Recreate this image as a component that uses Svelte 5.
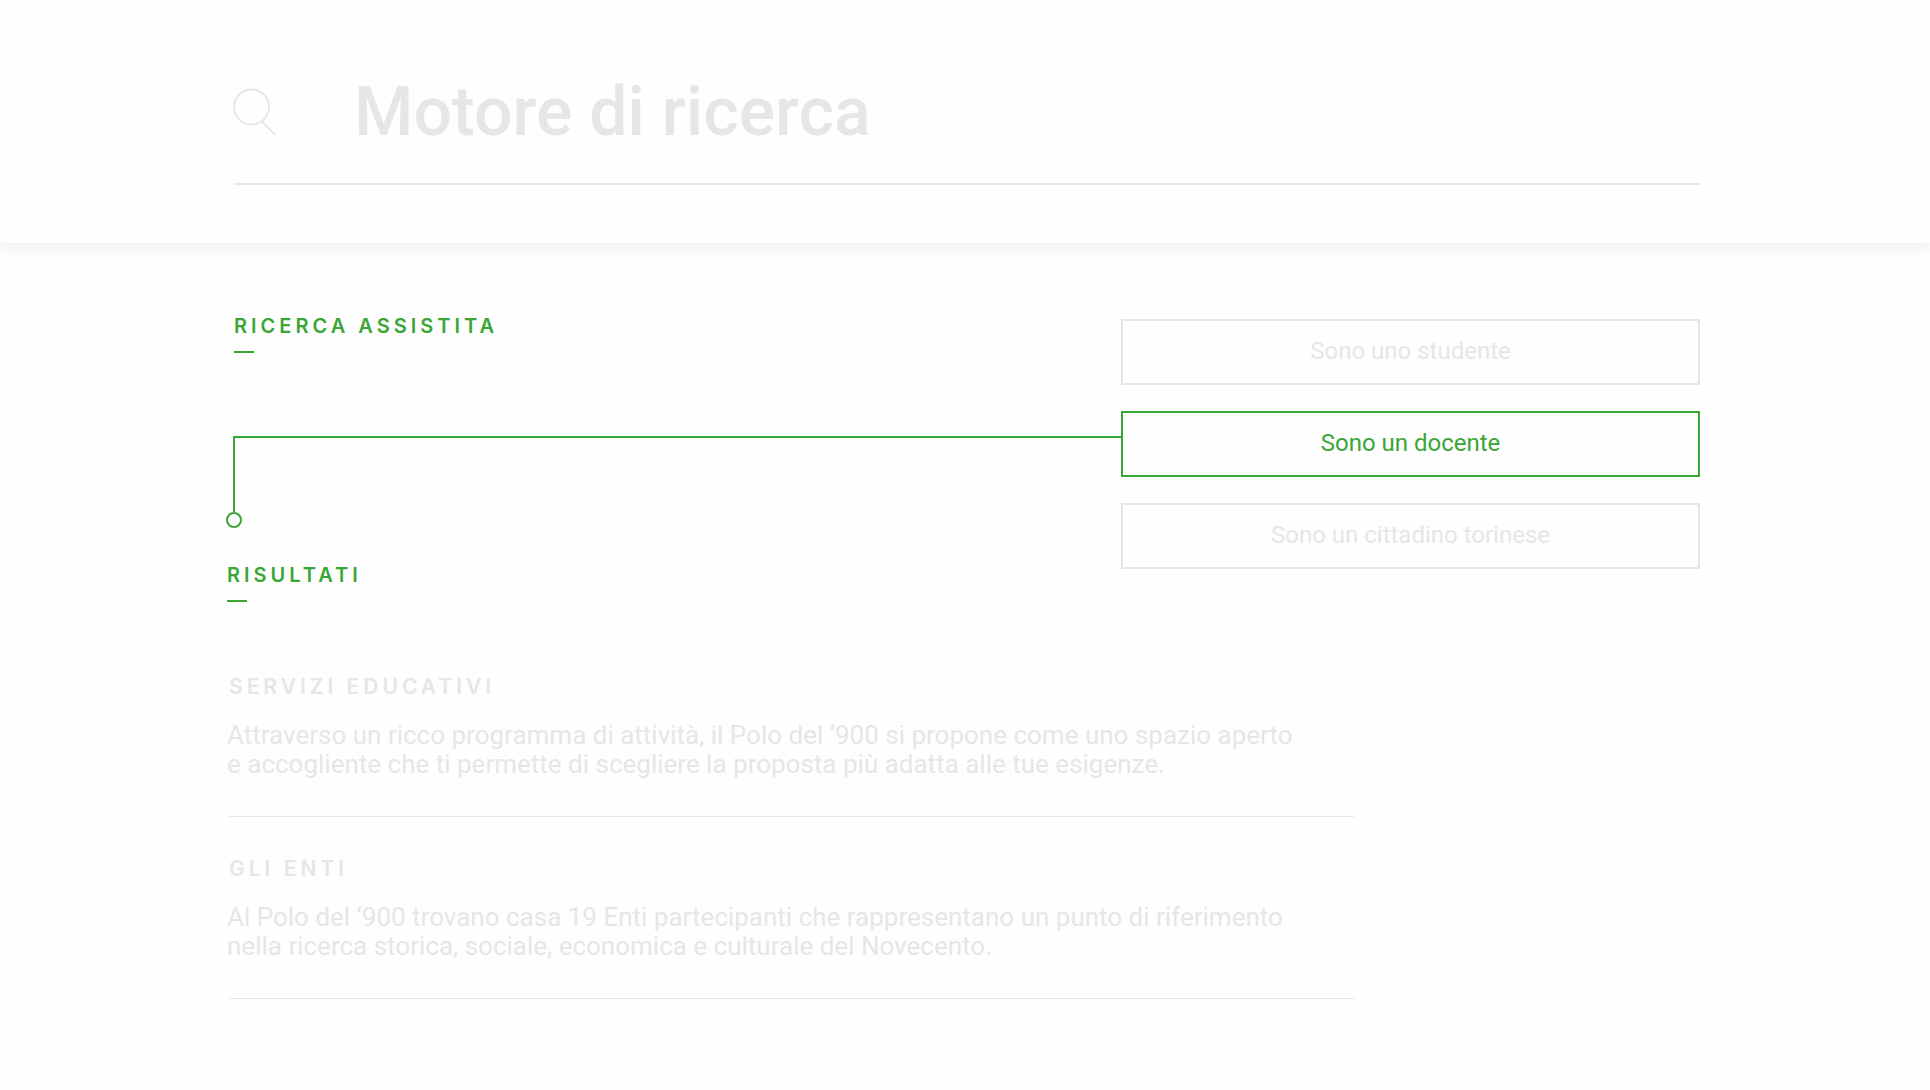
<script lang="ts">
  type Result = { title: string; lines: string[] };

  const profiles = ['Sono uno studente', 'Sono un docente', 'Sono un cittadino torinese'];

  const results: Result[] = [
    {
      title: 'Servizi educativi',
      lines: [
        'Attraverso un ricco programma di attività, il Polo del ‘900 si propone come uno spazio aperto',
        'e accogliente che ti permette di scegliere la proposta più adatta alle tue esigenze.'
      ]
    },
    {
      title: 'Gli enti',
      lines: [
        'Al Polo del ‘900 trovano casa 19 Enti partecipanti che rappresentano un punto di riferimento',
        'nella ricerca storica, sociale, economica e culturale del Novecento.'
      ]
    }
  ];

  let query = $state('');
  let selected = $state(1);
</script>

<header>
  <form class="search" role="search" onsubmit={(e) => e.preventDefault()}>
    <label for="query" aria-label="Motore di ricerca">
      <svg width="44" height="48" viewBox="0 0 44 48" fill="none" stroke="currentColor" stroke-width="2">
        <circle cx="17.5" cy="19" r="17.5" />
        <path d="M27.5 33 L41.5 47" />
      </svg>
    </label>
    <input id="query" type="text" placeholder="Motore di ricerca" bind:value={query} />
  </form>
</header>

<main>
  <section class="assisted">
    <div class="path">
      <h2 class="inset">Ricerca assistita</h2>
      <!-- line from the selected profile down to the results -->
      <div class="connector"></div>
      <h2>Risultati</h2>
    </div>
    <div class="profiles">
      {#each profiles as profile, i}
        <button
          type="button"
          class:active={selected === i}
          aria-pressed={selected === i}
          onclick={() => (selected = i)}
        >
          {profile}
        </button>
      {/each}
    </div>
  </section>

  <section class="results">
    {#each results as result}
      <article>
        <h3>{result.title}</h3>
        <p>{result.lines[0]}<br />{result.lines[1]}</p>
        <hr />
      </article>
    {/each}
  </section>
</main>

<style>
  :global(body) {
    margin: 0;
    background: #fefefe;
    font-family: Roboto, 'Liberation Sans', sans-serif;
    --green: #3aa635;
    --grey: #e6e6e6;
  }

  header {
    padding: 72px 230px 58px 234px;
    background: #fefefe;
    box-shadow: 0 0 20px rgba(0, 0, 0, 0.1);
  }

  .search {
    display: flex;
    align-items: center;
    gap: 76px;
    padding-bottom: 31px;
    border-bottom: 2px solid var(--grey);
    color: var(--grey);
  }

  .search label {
    display: flex;
  }

  .search svg {
    overflow: visible;
  }

  .search input {
    flex: 1;
    min-width: 0;
    height: 80px;
    padding: 0;
    border: 0;
    outline: 0;
    background: none;
    color: #999;
    font: 500 68px/80px Roboto, 'Liberation Sans', sans-serif;
  }

  .search input::placeholder {
    color: var(--grey);
    opacity: 1;
  }

  main {
    padding: 73px 230px 90px 227px;
  }

  .assisted {
    display: grid;
    grid-template-columns: 894fr 579fr;
  }

  .inset {
    margin-left: 7px;
  }

  h2,
  h3 {
    margin: 0;
    font-family: Inter, 'Liberation Sans', sans-serif;
    font-weight: 600;
    letter-spacing: 4px;
    text-transform: uppercase;
  }

  h2 {
    font-size: 20px;
    line-height: 20px;
    color: var(--green);
  }

  h2::after {
    content: '';
    display: block;
    width: 20px;
    height: 2px;
    margin-top: 15px;
    background: var(--green);
  }

  .connector {
    position: relative;
    box-sizing: border-box;
    height: 76px;
    margin: 83px 0 53px 6px;
    border: solid var(--green);
    border-width: 2px 0 0 2px;
  }

  .connector::after {
    content: '';
    position: absolute;
    top: 100%;
    left: -9px;
    width: 12px;
    height: 12px;
    border: 2px solid var(--green);
    border-radius: 50%;
  }

  .profiles {
    display: flex;
    flex-direction: column;
    gap: 26px;
    padding-top: 3px;
  }

  button {
    height: 66px;
    padding: 0 0 2px;
    border: 2px solid var(--grey);
    background: none;
    color: var(--grey);
    font: 400 24px/28px Roboto, 'Liberation Sans', sans-serif;
    cursor: pointer;
  }

  button.active {
    border-color: var(--green);
    color: var(--green);
  }

  .results {
    display: flex;
    flex-direction: column;
    gap: 40px;
    width: 76.5%;
    margin-top: 73px;
    color: var(--grey);
  }

  h3 {
    padding-left: 2px;
    font-size: 21px;
    line-height: 24px;
  }

  p {
    margin: 22px 0 37px;
    font-size: 26px;
    line-height: 29px;
    white-space: nowrap;
  }

  hr {
    height: 1px;
    margin: 0 0 0 2px;
    border: 0;
    background: var(--grey);
  }
</style>
